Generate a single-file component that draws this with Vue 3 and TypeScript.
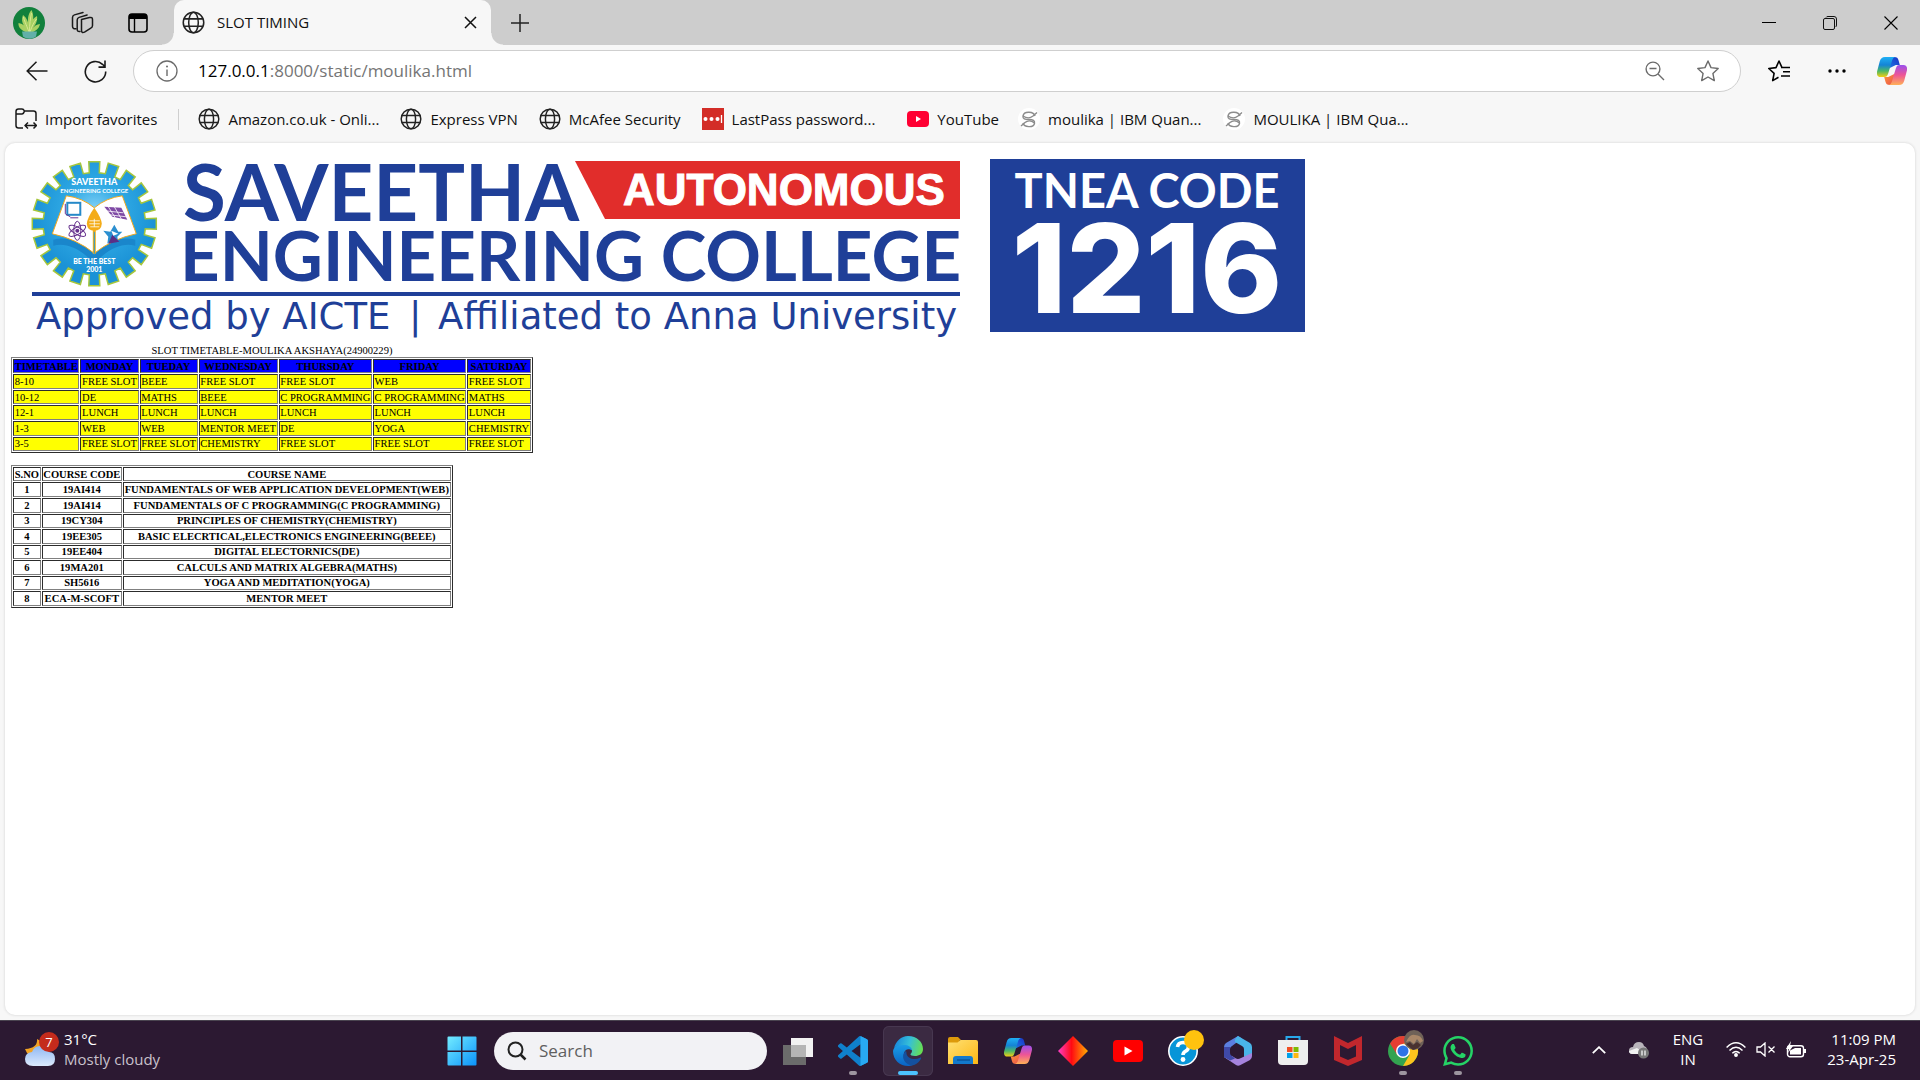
<script setup lang="ts">
interface Bookmark {
  label: string
  icon: 'globe' | 'lastpass' | 'youtube' | 'ibm'
}

const bookmarks: Bookmark[] = [
  { label: 'Amazon.co.uk - Onli...', icon: 'globe' },
  { label: 'Express VPN', icon: 'globe' },
  { label: 'McAfee Security', icon: 'globe' },
  { label: 'LastPass password...', icon: 'lastpass' },
  { label: 'YouTube', icon: 'youtube' },
  { label: 'moulika | IBM Quan...', icon: 'ibm' },
  { label: 'MOULIKA | IBM Qua...', icon: 'ibm' },
]

const days: string[] = ['TIMETABLE', 'MONDAY', 'TUEDAY', 'WEDNESDAY', 'THURSDAY', 'FRIDAY', 'SATURDAY']

const slots: string[][] = [
  ['8-10', 'FREE SLOT', 'BEEE', 'FREE SLOT', 'FREE SLOT', 'WEB', 'FREE SLOT'],
  ['10-12', 'DE', 'MATHS', 'BEEE', 'C PROGRAMMING', 'C PROGRAMMING', 'MATHS'],
  ['12-1', 'LUNCH', 'LUNCH', 'LUNCH', 'LUNCH', 'LUNCH', 'LUNCH'],
  ['1-3', 'WEB', 'WEB', 'MENTOR MEET', 'DE', 'YOGA', 'CHEMISTRY'],
  ['3-5', 'FREE SLOT', 'FREE SLOT', 'CHEMISTRY', 'FREE SLOT', 'FREE SLOT', 'FREE SLOT'],
]

const courses: string[][] = [
  ['1', '19AI414', 'FUNDAMENTALS OF WEB APPLICATION DEVELOPMENT(WEB)'],
  ['2', '19AI414', 'FUNDAMENTALS OF C PROGRAMMING(C PROGRAMMING)'],
  ['3', '19CY304', 'PRINCIPLES OF CHEMISTRY(CHEMISTRY)'],
  ['4', '19EE305', 'BASIC ELECRTICAL,ELECTRONICS ENGINEERING(BEEE)'],
  ['5', '19EE404', 'DIGITAL ELECTORNICS(DE)'],
  ['6', '19MA201', 'CALCULS AND MATRIX ALGEBRA(MATHS)'],
  ['7', 'SH5616', 'YOGA AND MEDITATION(YOGA)'],
  ['8', 'ECA-M-SCOFT', 'MENTOR MEET'],
]

// Outline of the cog wheel in the college emblem, centred on the origin.
function cogPoints(teeth: number, inner: number, outer: number, half: number): string {
  const points: string[] = []
  for (let i = 0; i < teeth; i++) {
    const a = (i * 2 * Math.PI) / teeth
    const corners = [[-half, inner], [-half - 0.5, outer], [half + 0.5, outer], [half, inner]]
    for (const [x, y] of corners) {
      const px = x * Math.cos(a) + y * Math.sin(a)
      const py = x * Math.sin(a) - y * Math.cos(a)
      points.push(`${px.toFixed(2)},${py.toFixed(2)}`)
    }
  }
  return points.join(' ')
}

const cog = cogPoints(20, 51, 62, 5)
</script>

<template>
  <div class="screen">
    <svg class="sprite" aria-hidden="true">
      <defs>
        <linearGradient id="cpLeft" x1="0" y1="0" x2="0" y2="1">
          <stop offset="0" stop-color="#1fb0f5" /><stop offset=".4" stop-color="#1484d6" />
          <stop offset=".7" stop-color="#4cb866" /><stop offset="1" stop-color="#f4cf12" />
        </linearGradient>
        <linearGradient id="cpTop" x1="0" y1="1" x2="1" y2="0">
          <stop offset="0" stop-color="#1d7fe8" /><stop offset="1" stop-color="#1a2fc4" />
        </linearGradient>
        <linearGradient id="cpRight" x1="0" y1="0" x2="0" y2="1">
          <stop offset="0" stop-color="#9a50ee" /><stop offset=".5" stop-color="#ee5596" />
          <stop offset="1" stop-color="#ffb056" />
        </linearGradient>
        <linearGradient id="cpBottom" x1="0" y1="0" x2="1" y2="1">
          <stop offset="0" stop-color="#ff9a3c" /><stop offset="1" stop-color="#e84a4a" />
        </linearGradient>
        <linearGradient id="edgeTop" x1="0" y1=".4" x2="1" y2=".6">
          <stop offset="0" stop-color="#1787dc" /><stop offset=".5" stop-color="#36bfd8" />
          <stop offset="1" stop-color="#68e04e" />
        </linearGradient>
        <linearGradient id="edgeBody" x1="0" y1="0" x2="0" y2="1">
          <stop offset="0" stop-color="#1ba0e8" /><stop offset="1" stop-color="#0a63c4" />
        </linearGradient>
        <linearGradient id="winTile" x1="0" y1="0" x2="1" y2="1">
          <stop offset="0" stop-color="#73ecff" /><stop offset="1" stop-color="#0b92fa" />
        </linearGradient>
        <linearGradient id="folder" x1="0" y1="0" x2="1" y2="1">
          <stop offset="0" stop-color="#ffe073" /><stop offset="1" stop-color="#fcb714" />
        </linearGradient>
        <linearGradient id="diamond">
          <stop offset="0" stop-color="#ff3fc8" /><stop offset=".45" stop-color="#ff0a12" />
          <stop offset="1" stop-color="#ffae00" />
        </linearGradient>
        <linearGradient id="cloud" x1="0" y1="0" x2="0" y2="1">
          <stop offset="0" stop-color="#8fb8f2" /><stop offset="1" stop-color="#dce9fc" />
        </linearGradient>
      </defs>
      <symbol id="globe" viewBox="0 0 24 24">
        <g fill="none" stroke="#222" stroke-width="1.6">
          <circle cx="12" cy="12" r="10.7" /><ellipse cx="12" cy="12" rx="5" ry="10.7" />
          <path d="M2 8.2h20M2 15.8h20" />
        </g>
      </symbol>
      <symbol id="copilot" viewBox="0 0 30 28">
        <path d="M13 0h4c3 0 4 1 4.600 3.500l1.200 4.500h-4l-8 4z" fill="url(#cpTop)" />
        <path d="M17 28h-4c-3 0-4-1-4.600-3.500l-1.200-4.500h4l8-4z" fill="url(#cpBottom)" />
        <path d="M8 0h11c-2.500 0-3.500 2-4.200 4.500l-3.600 12c-.8 2.500-1.700 3.500-3.700 3.500h-4c-3 0-4.200-2.500-3.300-6l2.500-9.500c.9-3 2.300-4.500 5.300-4.500z" fill="url(#cpLeft)" />
        <path d="M22 28h-11c2.500 0 3.500-2 4.200-4.500l3.600-12c.8-2.500 1.700-3.500 3.700-3.500h4c3 0 4.200 2.500 3.300 6l-2.500 9.500c-.9 3-2.300 4.500-5.300 4.500z" fill="url(#cpRight)" />
      </symbol>
    </svg>

    <header class="browser">
      <div class="tab-strip">
        <button class="plain avatar" aria-label="Profile">
          <svg width="32" height="32" viewBox="0 0 32 32">
            <circle cx="16" cy="16" r="16" fill="#11803c" />
            <path d="M16 26C8 24 5 20 5.500 16c5 1 8 4 10 8C9 18 8 13 10 8c4 3 6 8 6 14C14 12 15 7 18.500 3c3 6 2 12-1.500 19 0-6 3-11 7-13 1 5-2 10-6 14 3-4 6-6 9-6-1 5-5 8-11 9z" fill="#a8d062" />
            <path d="M16 25C13 17 11 13 10.500 10M16.500 25c0-8 1-14 2-19M17 25c2-6 4-10 6.500-13" fill="none" stroke="#d8ea92" stroke-width="1" />
            <path d="M9 24.500h15l-1 5c-4 3-9 3-13 0z" fill="#62b0a8" />
          </svg>
        </button>
        <button class="plain workspaces" aria-label="Workspaces">
          <svg width="23" height="23" viewBox="0 0 23 23" fill="none" stroke="#1a1a1a" stroke-width="1.500" stroke-linejoin="round" stroke-linecap="round">
            <path d="M10.500 8.500 18.500 6.500q3-.6 3 2v6q0 1.800-1.700 2.600l-6.300 4q-3 1.400-3-1.800z" />
            <path d="M9 20.500q-2.800.4-2.800-2V9q0-2 1.900-2.600l8-2.400" />
            <path d="M5 17.800q-3.500.2-3.500-2.500V6.500q0-2 1.900-2.600L12 1.500" />
          </svg>
        </button>
        <button class="plain" aria-label="Tab actions menu">
          <svg width="20" height="20" viewBox="0 0 20 20">
            <rect x="1" y="1" width="18" height="18" rx="3" fill="none" stroke="#000" stroke-width="1.600" />
            <path d="M1 6V4q0-3 3-3h12q3 0 3 3v2z" fill="#000" /><path d="M6.500 6v13" stroke="#000" stroke-width="1.400" />
          </svg>
        </button>
        <div class="tab">
          <svg width="23" height="23"><use href="#globe" /></svg>
          <span class="tab-title">SLOT TIMING</span>
          <button class="plain" aria-label="Close tab">
            <svg width="13" height="13" viewBox="0 0 13 13"><path d="M1 1l11 11M12 1 1 12" stroke="#111" stroke-width="1.500" /></svg>
          </button>
        </div>
        <button class="plain new-tab" aria-label="New tab">
          <svg width="18" height="18" viewBox="0 0 18 18"><path d="M9 0v18M0 9h18" stroke="#222" stroke-width="1.500" /></svg>
        </button>
        <div class="window-buttons">
          <button class="plain" aria-label="Minimise">
            <svg width="14" height="14" viewBox="0 0 14 14"><path d="M0 6.500h14" stroke="#000" /></svg>
          </button>
          <button class="plain" aria-label="Restore">
            <svg width="14" height="14" viewBox="0 0 14 14" fill="none" stroke="#111"><rect x=".5" y="2.500" width="11" height="11" rx="1.500" /><path d="M3 1.500q.5-1 2-1h6q2.500 0 2.500 2.500v6q0 1.500-1 2" /></svg>
          </button>
          <button class="plain" aria-label="Close">
            <svg width="14" height="14" viewBox="0 0 14 14"><path d="M.5.5l13 13M13.500.5l-13 13" stroke="#000" stroke-width="1.100" /></svg>
          </button>
        </div>
      </div>

      <div class="toolbar">
        <button class="plain tool" aria-label="Back">
          <svg width="22" height="20" viewBox="0 0 22 20" fill="none" stroke="#1a1a1a" stroke-width="1.500"><path d="M21.500 10H1M10.500.8 1.200 10l9.300 9.200" /></svg>
        </button>
        <button class="plain tool" aria-label="Refresh">
          <svg width="23" height="23" viewBox="0 0 23 23" fill="none" stroke="#1a1a1a" stroke-width="1.600"><path d="M21.700 11.500A10.200 10.200 0 1 1 18.500 4.300L21 6.800M21 .5v6.600h-6.500" /></svg>
        </button>
        <div class="address">
          <svg width="22" height="22" viewBox="0 0 22 22"><circle cx="11" cy="11" r="10" fill="none" stroke="#6b6b6b" stroke-width="1.300" /><path d="M11 9.500v6.500" stroke="#6b6b6b" stroke-width="1.400" /><circle cx="11" cy="6.500" r="1" fill="#6b6b6b" /></svg>
          <label class="host" for="url">127.0.0.1</label>
          <input id="url" class="path" type="text" value=":8000/static/moulika.html" />
          <button class="plain" aria-label="Zoom out">
            <svg width="20" height="20" viewBox="0 0 20 20" fill="none" stroke="#6b6b6b" stroke-width="1.400"><circle cx="8" cy="8" r="6.900" /><path d="M4.500 7.500h7M13 13l6 6" /></svg>
          </button>
          <button class="plain star" aria-label="Add to favorites">
            <svg width="22" height="22" viewBox="0 0 22 22" fill="none" stroke="#6b6b6b" stroke-width="1.400" stroke-linejoin="round"><path d="m11 1 3 6.600 7.200.9-5.300 4.900 1.400 7.200L11 17l-6.300 3.600 1.400-7.200L.8 8.500 8 7.600z" /></svg>
          </button>
        </div>
        <button class="plain tool" aria-label="Favorites">
          <svg width="22" height="22" viewBox="0 0 22 22" fill="none" stroke="#000" stroke-width="1.600" stroke-linejoin="round"><path d="M10.500 17.200 4.700 20.600l1.400-7.200L.8 8.500 8 7.600 11 1l3 6.600M13 7.500h9M15 11.700h7M13 16h9" /></svg>
        </button>
        <button class="plain tool" aria-label="Settings and more">
          <svg width="18" height="4" viewBox="0 0 18 4"><circle cx="2" cy="2" r="1.700" /><circle cx="9" cy="2" r="1.700" /><circle cx="16" cy="2" r="1.700" /></svg>
        </button>
        <button class="plain tool copilot" aria-label="Copilot"><svg width="30" height="28"><use href="#copilot" /></svg></button>
      </div>

      <nav class="bookmarks">
        <button class="plain bookmark">
          <svg width="22" height="22" viewBox="0 0 22 22" fill="none" stroke="#1a1a1a" stroke-width="1.500" stroke-linejoin="round"><path d="M8 20H3.500q-2.500 0-2.500-2.500V3.500Q1 1 3.500 1H7q1.500 0 2.500 2h9Q21 3 21 5.500V13M1 6h6q1.500 0 2.500-3" /><path d="M10.500 17.500h10.500M13 14.500l-3 3 3 3M18.500 14.500l3 3-3 3" /></svg>
          Import favorites
        </button>
        <span class="divider"></span>
        <a v-for="mark in bookmarks" :key="mark.label" href="#" class="bookmark" :class="mark.icon">
          <svg v-if="mark.icon === 'globe'" width="22" height="22"><use href="#globe" /></svg>
          <svg v-else-if="mark.icon === 'lastpass'" width="22" height="22" viewBox="0 0 22 22"><path d="M0 0h22v22H0z" fill="#d32d27" /><circle cx="3.500" cy="11" r="2" fill="#fff" /><circle cx="9.500" cy="11" r="2" fill="#fff" /><circle cx="15.500" cy="11" r="2" fill="#fff" /><path d="M19.500 7v8" stroke="#fff" stroke-width="1.300" /></svg>
          <svg v-else-if="mark.icon === 'youtube'" width="22" height="22" viewBox="0 0 22 22"><rect y="3" width="22" height="16" rx="4" fill="#ff0033" /><path d="M9 8v6l5-3z" fill="#fff" /></svg>
          <svg v-else width="22" height="22" viewBox="0 0 22 22"><circle cx="11" cy="11" r="11" fill="#fff" /><g fill="none" stroke="#8c8c8c" stroke-width="1.400"><path d="M17 8C16 3.500 6 2.500 5 8c-.5 3 2 3.500 6 3.500s6 1 5.500 4C15.500 20 6 19.500 5 15" /><path d="M19 4.500 15 8c-3 2.500-7 2-10 0M3 18l4-3.500c3-2.500 7-1.500 9.500.5" /></g></svg>
          {{ mark.label }}
        </a>
      </nav>
    </header>

    <main class="viewport">
      <div class="page">
        <svg class="banner" width="1300" height="196" viewBox="11 149 1300 196" role="img" aria-label="Saveetha Engineering College">
          <defs>
            <radialGradient id="cogFill" cx=".5" cy=".4" r=".5">
              <stop offset="0" stop-color="#8ad4f7" /><stop offset=".45" stop-color="#2fa9e4" /><stop offset="1" stop-color="#1b92d6" />
            </radialGradient>
          </defs>
          <g transform="translate(94.300 223.800)">
            <polygon :points="cog" fill="url(#cogFill)" stroke="#a6c63c" stroke-width="1.500" />
            <path d="M-41 16C-28 12-12 18 0 31 12 18 28 12 41 16V22C28 18 12 26 0 40-12 26-28 18-41 22z" fill="#1a86cb" />
            <path d="M-28-28Q-12-26 0-16 12-26 28-28L42 10Q18 15 0 29.500-18 15-42 10z" fill="#fff" stroke="#f2a81d" stroke-width="1" />
            <path d="M0 5v25" stroke="#f5ad17" stroke-width="3" /><path d="M0 8v22" stroke="#2199da" stroke-width="1" />
            <path d="M0-16Q7-6 7.500 0 7 7 0 7-7 7-7.500 0-7-6 0-16z" fill="#f4ac18" />
            <path d="M-5-3H5.500M-5 0H5.500M-4 3H5M0-5v8" stroke="#fff" stroke-width=".8" />
            <rect x="-27" y="-21" width="13" height="12" fill="none" stroke="#2589c8" stroke-width="2" />
            <path d="M-29-20v10l5 3M-24-6h8" stroke="#6a3390" stroke-width="1" fill="none" />
            <g fill="none" stroke="#65308c" stroke-width="1">
              <ellipse cx="-17" cy="7" rx="3.500" ry="9.500" />
              <ellipse cx="-17" cy="7" rx="3.500" ry="9.500" transform="rotate(60 -17 7)" />
              <ellipse cx="-17" cy="7" rx="3.500" ry="9.500" transform="rotate(120 -17 7)" />
            </g>
            <circle cx="-17" cy="7" r="2" fill="#65308c" />
            <path d="M10-17 27-16 33-4 18-7z" fill="#7f4aa5" /><path d="M14-17l7 11M20-17l7 12M11-13l18 2M15-9l17 2" stroke="#fff" stroke-width=".8" />
            <path d="M20 1l4 7h4l-5 5 1 6-5-3-6 4 1-7-5-6 7 1z" fill="#2b8fd0" /><path d="M14 20l4-9 7 7z" fill="#5b2f86" /><path d="M17 7l7 3-5 2z" fill="#fff" />
            <g class="emblem-text" text-anchor="middle" fill="#fff">
              <text class="emblem-name" y="-39">SAVEETHA</text>
              <text class="emblem-sub" y="-31">ENGINEERING COLLEGE</text>
              <text class="emblem-motto" y="40">BE THE BEST</text>
              <text class="emblem-motto" y="48">2001</text>
            </g>
          </g>
          <g class="college" fill="#1f3f98">
            <text class="saveetha" x="183" y="221">SAVEETHA</text>
            <text class="engineering" x="180" y="281">ENGINEERING COLLEGE</text>
            <path d="M32 292h928v4H32z" />
            <g class="tagline">
              <text x="36" y="329">Approved by AICTE</text>
              <text x="409" y="329">|</text>
              <text x="438" y="329">Affiliated to Anna University</text>
            </g>
          </g>
          <path d="M575 161h385v58H605z" fill="#e12d2b" />
          <text class="autonomous" x="623" y="205">AUTONOMOUS</text>
          <path d="M990 159h315v173H990z" fill="#1f3f98" />
          <text class="tnea" x="1147" y="208" text-anchor="middle">TNEA CODE</text>
          <text class="code" x="1147" y="313" text-anchor="middle">1216</text>
        </svg>

        <div class="tables">
          <table>
            <caption>SLOT TIMETABLE-MOULIKA AKSHAYA(24900229)</caption>
            <thead>
              <tr class="days"><th v-for="day in days" :key="day" scope="col">{{ day }}</th></tr>
            </thead>
            <tbody>
              <tr v-for="row in slots" :key="row[0]" class="slots">
                <td v-for="(cell, i) in row" :key="i">{{ cell }}</td>
              </tr>
            </tbody>
          </table>
          <br />
          <table>
            <thead>
              <tr><th scope="col">S.NO</th><th scope="col">COURSE CODE</th><th scope="col">COURSE NAME</th></tr>
            </thead>
            <tbody>
              <tr v-for="row in courses" :key="row[0]">
                <th v-for="(cell, i) in row" :key="i">{{ cell }}</th>
              </tr>
            </tbody>
          </table>
        </div>
      </div>
    </main>

    <footer class="taskbar">
      <button class="plain weather">
        <svg width="36" height="38" viewBox="0 0 36 38">
          <path d="M12 8q1 9-12 10 3 8 10 8 9-1 8-10-1-6-6-8z" fill="#f2a324" />
          <path d="M8 35q-8 0-8-7 0-6 7-7 2-6 8-6 7 0 9 6 6 0 6 7t-7 7z" fill="url(#cloud)" />
          <circle cx="24" cy="11" r="10" fill="#c42b1c" /><text class="badge" x="24" y="16" text-anchor="middle">7</text>
        </svg>
        <span class="lines"><span class="temp">31°C</span><span class="sky">Mostly cloudy</span></span>
      </button>

      <div class="apps">
        <button class="plain app" aria-label="Start">
          <svg width="30" height="30" viewBox="0 0 30 30" fill="url(#winTile)"><path d="M1.500.500H14v14H.500V1.500q0-1 1-1zM15.500.500h13q1 0 1 1v13h-14zM.500 16H14v13.500H1.500q-1 0-1-1zM15.500 16h14v12.500q0 1-1 1h-13z" /></svg>
        </button>
        <div class="search">
          <svg width="20" height="20" viewBox="0 0 20 20" fill="none" stroke="#222" stroke-width="2"><circle cx="8.500" cy="8.500" r="7" /><path d="m13.500 13.500 5 5" stroke-width="2.500" /></svg>
          <input type="search" placeholder="Search" aria-label="Search" />
        </div>
        <button class="plain app" aria-label="Task view">
          <svg width="30" height="28" viewBox="0 0 30 28"><path d="M8 1h22v19H8z" fill="#f2f2f2" /><path d="M0 8h23v20H0z" fill="#6b6b6b" /><path d="M8 8h15v12H8z" fill="#b5b5b5" /></svg>
        </button>
        <button class="plain app" aria-label="Visual Studio Code">
          <svg width="30" height="30" viewBox="0 0 24 24"><path fill="#0f80cc" d="M23.150 2.587L18.210.210a1.494 1.494 0 0 0-1.705.290l-9.460 8.630-4.120-3.128a.999.999 0 0 0-1.276.057L.327 7.261A1 1 0 0 0 .326 8.740L3.899 12 .326 15.260a1 1 0 0 0 .001 1.479L1.650 17.940a.999.999 0 0 0 1.276.057l4.120-3.128 9.460 8.630a1.492 1.492 0 0 0 1.704.290l4.942-2.377A1.500 1.500 0 0 0 24 20.060V3.939a1.500 1.500 0 0 0-.850-1.352zm-5.146 14.861L10.826 12l7.178-5.448v10.896z" /><path d="M18 0l5.200 2.600q.8.400.8 1.300v16.200q0 .9-.8 1.300L18 24z" fill="#28a9f2" /></svg>
          <span class="running"></span>
        </button>
        <button class="plain app active" aria-label="Microsoft Edge">
          <svg width="30" height="30" viewBox="0 0 30 30">
            <path d="M0 15C1 10 6 8 11 8c5 0 9 3 9 7-4-3-8-2-9 2-1 5 3 11 9 12-2 .8-3.500 1-5 1C7 30 0 24 0 15z" fill="url(#edgeBody)" />
            <path d="M1 12C3 5 8 0 15 0c9 0 15 6 15 13 0 5-4 7-8 7-3 0-5-1-4.500-2 1-1 1.500-2 1.500-3.500 0-3.500-4-5.500-8-5.500-4.500 0-8 1-10 3z" fill="url(#edgeTop)" />
            <path d="M13 15c-6 4-2 14 6.500 14.300C24 28.500 27 25 28 22.500c.4-.9-.3-1.100-1-.7-6 3-13 .2-13.500-4.300-.1-1 0-2-.5-2.500z" fill="#14519f" />
          </svg>
          <span class="running"></span>
        </button>
        <button class="plain app" aria-label="File Explorer">
          <svg width="30" height="27" viewBox="0 0 30 27"><path d="M0 2q0-2 2-2h8l3 3h-1l-2 4H0z" fill="#dd9a0b" /><path d="M0 5.500h9.500L12.500 3H28q2 0 2 2v22H0z" fill="url(#folder)" /><path d="M5 27v-5q0-3 3-3h14q3 0 3 3v5z" fill="#1379cc" /><path d="M9 23h13" stroke="#0a4f94" stroke-width="1.300" /></svg>
        </button>
        <button class="plain app" aria-label="Copilot"><svg width="28" height="26"><use href="#copilot" /></svg></button>
        <button class="plain app" aria-label="Gem"><svg width="30" height="30" viewBox="0 0 30 30"><path d="m15 0 15 15-15 15L0 15z" fill="url(#diamond)" /></svg></button>
        <button class="plain app" aria-label="YouTube"><svg width="30" height="22" viewBox="0 0 30 22"><rect width="30" height="22" rx="4" fill="#f00" /><path d="M11.500 6.500v9l8-4.500z" fill="#fff" /></svg></button>
        <button class="plain app" aria-label="Help">
          <svg class="spill" width="30" height="30" viewBox="0 0 30 30"><circle cx="15" cy="15" r="14.200" fill="#0795d8" stroke="#fff" stroke-width="1.600" /><path d="M9.500 11q.5-4.500 5.500-4.500t5.500 4.200q0 2.800-3 4.600-2.500 1.500-2.500 3.700" fill="none" stroke="#fff" stroke-width="3.600" /><circle cx="15" cy="23.500" r="2.400" fill="#fff" /><circle cx="26" cy="4" r="10" fill="#ffc20e" /></svg>
        </button>
        <button class="plain app" aria-label="Microsoft 365">
          <svg width="28" height="30" viewBox="0 0 28 30"><path d="M14 0 2 7Q0 8.500 0 11v10l6 3.500V13q0-2 2-3l10-7.500z" fill="#5b7fe0" /><path d="M14 0l12 7q2 1.500 2 4v9l-8 1v-8q0-2-2-3l-7-4q-1-3 3-6z" fill="#49b4e8" /><path d="M0 21 12 29q2 1.300 4 .3L26 24q2-1.500 2-4v-3l-11 5q-3 1.600-5 .5L8 20l-4 2z" fill="#a583dd" /><path d="M0 11v10l6 3.500 5-2L8 20q-2-1-2-3v-6z" fill="#3f49a8" /></svg>
        </button>
        <button class="plain app" aria-label="Microsoft Store">
          <svg width="30" height="29" viewBox="0 0 30 29"><path d="M8.500 6V1h13v5" fill="none" stroke="#28a8ea" stroke-width="2" /><path d="M0 4h30v21q0 4-4 4H4q-4 0-4-4z" fill="#eee" /><path d="M9 11h5.500v5H9z" fill="#f04e23" /><path d="M15.500 11h5v5h-5z" fill="#7fba00" /><path d="M9 17h5.500v5H9z" fill="#00a1ea" /><path d="M15.500 17h5v5h-5z" fill="#fdb813" /></svg>
        </button>
        <button class="plain app" aria-label="McAfee"><svg width="28" height="30" viewBox="0 0 28 30"><path d="m0 0 14 7L28 0v24l-14 6-14-6z" fill="#c1272d" /><path d="m6 9 8 4 8-4v11.500l-8 3.500-8-3.500z" fill="#2c1932" /></svg></button>
        <button class="plain app" aria-label="Google Chrome">
          <svg class="spill" width="30" height="30" viewBox="0 0 30 30"><circle cx="15" cy="15" r="15" fill="#33a350" /><path d="M2 7.500A15 15 0 0 1 28 7.500L15 8.500 9 18.500z" fill="#e53e32" /><path d="M28 7.500A15 15 0 0 1 15 30l6.500-11L15 7.500z" fill="#fcc31d" /><circle cx="15" cy="15" r="7" fill="#fff" /><circle cx="15" cy="15" r="5.500" fill="#2d73e8" /><circle cx="26" cy="4" r="10" fill="#6f6258" /><path d="M18 6q4-9 9-7 6 0 8 6l-3 2-3-4-3 5-4-3z" fill="#a98768" /><path d="M18 8l4-2 3 3 4-3 4 3-3 3-5 2z" fill="#4a3230" /></svg>
          <span class="running"></span>
        </button>
        <button class="plain app" aria-label="WhatsApp">
          <svg width="30" height="30" viewBox="0 0 24 24"><path fill="#25d366" d="M17.472 14.382c-.297-.149-1.758-.867-2.030-.967-.273-.099-.471-.148-.670.150-.197.297-.767.966-.940 1.164-.173.199-.347.223-.644.075-.297-.150-1.255-.463-2.390-1.475-.883-.788-1.480-1.761-1.653-2.059-.173-.297-.018-.458.130-.606.134-.133.298-.347.446-.520.149-.174.198-.298.298-.497.099-.198.050-.371-.025-.520-.075-.149-.669-1.612-.916-2.207-.242-.579-.487-.500-.669-.510-.173-.008-.371-.010-.570-.010-.198 0-.520.074-.792.372-.272.297-1.040 1.016-1.040 2.479 0 1.462 1.065 2.875 1.213 3.074.149.198 2.096 3.200 5.077 4.487.709.306 1.262.489 1.694.625.712.227 1.360.195 1.871.118.571-.085 1.758-.719 2.006-1.413.248-.694.248-1.289.173-1.413-.074-.124-.272-.198-.570-.347m-5.421 7.403h-.004a9.870 9.870 0 01-5.031-1.378l-.361-.214-3.741.982.998-3.648-.235-.374a9.860 9.860 0 01-1.510-5.260c.001-5.450 4.436-9.884 9.888-9.884 2.640 0 5.122 1.030 6.988 2.898a9.825 9.825 0 012.893 6.994c-.003 5.450-4.437 9.884-9.885 9.884m8.413-18.297A11.815 11.815 0 0012.050 0C5.495 0 .160 5.335.157 11.892c0 2.096.547 4.142 1.588 5.945L.057 24l6.305-1.654a11.882 11.882 0 005.683 1.448h.005c6.554 0 11.890-5.335 11.893-11.893a11.821 11.821 0 00-3.480-8.413Z" /></svg>
          <span class="running"></span>
        </button>
      </div>

      <div class="tray">
        <button class="plain" aria-label="Show hidden icons"><svg width="14" height="8" viewBox="0 0 14 8" fill="none" stroke="#fff" stroke-width="1.800"><path d="m.8 7.200 6.200-6 6.200 6" /></svg></button>
        <button class="plain cloud-sync" aria-label="OneDrive"><svg width="20" height="18" viewBox="0 0 20 18"><path d="M4 13q-4 0-4-3.500T4 6q1-5 6-5 4 0 5 4 3 1 3 4t-3 4z" fill="#b9b4bb" /><path d="M3 13q-3-.5-3-3l8-3 8 6z" fill="#f1f1f1" /><circle cx="14.500" cy="12" r="5.500" fill="#777" /><path d="M13 9.500v5M16 9.500v5" stroke="#fff" stroke-width="1.200" /></svg></button>
        <button class="plain lines language"><span>ENG</span><span>IN</span></button>
        <button class="plain status" aria-label="Network, sound and battery">
          <svg width="20" height="15" viewBox="0 0 20 15" fill="none" stroke="#fff" stroke-width="1.500"><path d="M.6 5.500q9.400-9.400 18.800 0M3.500 8.500q6.500-6.400 13 0M6.300 11.300q3.700-3.600 7.400 0" /><circle cx="10" cy="13" r="1.200" fill="#fff" /></svg>
          <svg width="20" height="15" viewBox="0 0 20 15" fill="none" stroke="#fff" stroke-width="1.300"><path d="M1 5v5h3.500L9 14V1L4.500 5zM12.500 4.500l6 6M18.500 4.500l-6 6" /></svg>
          <svg width="20" height="18" viewBox="0 0 20 18"><rect x="1.500" y="4.700" width="16" height="11" rx="2.500" fill="none" stroke="#fff" stroke-width="1.400" /><path d="M4 9.500 9 7h6v6.500H4zM18 8h2v4h-2z" fill="#fff" /><path d="M5 0 0 8h3L2 12l5-7H4z" fill="#fff" /></svg>
        </button>
        <button class="plain lines clock"><span>11:09 PM</span><span>23-Apr-25</span></button>
      </div>
    </footer>
  </div>
</template>

<style>
body {
  margin: 0;
}
</style>

<style scoped>
.screen {
  display: flex;
  flex-direction: column;
  min-height: 100vh;
  background: #f7f7f7;
  font-family: "Open Sans", "Noto Sans", sans-serif;
  font-size: 15px;
  color: #111;
}
.sprite {
  position: absolute;
  width: 0;
  height: 0;
}
svg {
  display: block;
  flex: none;
}
.plain {
  display: flex;
  align-items: center;
  justify-content: center;
  padding: 0;
  border: 0;
  background: none;
  font: inherit;
  color: inherit;
}
.tab-strip {
  display: flex;
  align-items: center;
  height: 45px;
  padding-left: 13px;
  background: #cdcdcd;
}
.avatar {
  margin-top: 1px;
}
.workspaces {
  margin: 0 34px 0 26px;
}
.tab {
  position: relative;
  display: flex;
  align-items: center;
  box-sizing: border-box;
  width: 317px;
  height: 45px;
  margin-left: 26px;
  padding: 0 14px 0 8px;
  border-radius: 10px 10px 0 0;
  background: #f7f7f7;
}
.tab::before,
.tab::after {
  content: "";
  position: absolute;
  bottom: 0;
  width: 12px;
  height: 12px;
}
.tab::before {
  right: 100%;
  background: radial-gradient(circle at 0 0, transparent 11px, #f7f7f7 12px);
}
.tab::after {
  left: 100%;
  background: radial-gradient(circle at 100% 0, transparent 11px, #f7f7f7 12px);
}
.tab-title {
  flex: 1;
  margin-left: 12px;
}
.tab-title,
.host,
.lines {
  padding-bottom: 2px;
}
.new-tab {
  margin-left: 20px;
}
.window-buttons {
  display: flex;
  gap: 47px;
  margin-left: auto;
  padding-right: 22px;
}
.toolbar {
  display: flex;
  align-items: center;
  padding: 5px 8px 5px 17px;
}
.tool {
  width: 40px;
  height: 40px;
}
.tool + .tool {
  margin-left: 18px;
}
.address {
  display: flex;
  flex: 1;
  align-items: center;
  box-sizing: border-box;
  height: 42px;
  margin: 0 18px;
  padding: 0 21px 0 22px;
  border: 1px solid #cfcfcf;
  border-radius: 21px;
  background: #fff;
  font-size: 17px;
}
.host {
  margin-left: 20px;
  color: #000;
}
.path {
  flex: 1;
  min-width: 0;
  padding: 0 0 2px;
  border: 0;
  outline: 0;
  background: none;
  font: inherit;
  color: #757575;
}
.star {
  margin-left: 32px;
}
.tool.copilot {
  margin-left: 15px;
}
.bookmarks {
  display: flex;
  align-items: center;
  box-sizing: border-box;
  height: 46px;
  padding: 0 0 2px 15px;
}
.bookmark {
  display: flex;
  align-items: center;
  gap: 8px;
  margin-right: 21px;
  color: #111;
  text-decoration: none;
  white-space: nowrap;
}
.lastpass {
  margin-right: 32px;
}
.youtube {
  margin-right: 19px;
}
.ibm {
  margin-right: 22px;
}
.divider {
  width: 1px;
  height: 21px;
  margin-right: 19px;
  background: #cfcfcf;
}
.viewport {
  display: flex;
  flex: 1;
  flex-direction: column;
  padding: 0 5px 5px;
}
.page {
  flex: 1;
  padding: 6px;
  border-radius: 10px;
  background: #fff;
  box-shadow: 0 0 3px #cfcfcf;
}
.banner {
  overflow: visible;
}
.emblem-text,
.college,
.tnea {
  font-family: Lato, sans-serif;
  font-weight: 700;
}
.emblem-name {
  font-size: 9px;
  font-weight: 900;
}
.emblem-sub {
  font-size: 6px;
}
.emblem-motto {
  font-size: 7px;
  font-weight: 900;
}
.saveetha {
  font-size: 78px;
}
.engineering {
  font-size: 69px;
}
.tagline {
  font-family: "DejaVu Sans", sans-serif;
  font-size: 37px;
  font-weight: 400;
}
.autonomous {
  fill: #fff;
  stroke: #fff;
  stroke-width: 1px;
  font: 700 44px "Liberation Sans", sans-serif;
}
.tnea {
  fill: #fff;
  font-size: 47px;
}
.code {
  fill: #fff;
  font: 800 124px Inter, sans-serif;
}
/* The web page is viewed zoomed out. */
.tables {
  zoom: 0.66;
  font: 16px/18px "Liberation Serif", serif;
  color: #000;
}
table {
  border: 1px outset gray;
  border-spacing: 2px;
}
th,
td {
  padding: 1px;
  border: 1px inset gray;
  line-height: 17px;
  white-space: nowrap;
}
.days th {
  background: #00f;
}
.slots td {
  background: #ff0;
}
.taskbar {
  display: grid;
  grid-template-columns: 1fr auto 1fr;
  align-items: center;
  box-sizing: border-box;
  height: 60px;
  border-top: 1px solid #4a4450;
  background: #2c1932;
  color: #fff;
}
.weather {
  justify-self: start;
  gap: 3px;
  margin-left: 25px;
}
.lines {
  display: flex;
  flex-direction: column;
  line-height: 20px;
}
.weather,
.tray {
  margin-bottom: 2px;
}
.weather .lines {
  align-items: flex-start;
}
.sky {
  color: #c9c1cc;
}
.badge {
  fill: #fff;
  font-size: 13px;
}
.apps {
  display: flex;
  align-items: center;
  gap: 5px;
}
.app {
  position: relative;
  width: 50px;
  height: 50px;
  border-radius: 6px;
}
.spill {
  overflow: visible;
}
.app.active {
  background: #3b2a42;
  box-shadow: inset 0 0 0 1px #473750;
}
.running {
  position: absolute;
  bottom: 1px;
  left: 21px;
  width: 8px;
  height: 4px;
  border-radius: 2px;
  background: #9d959f;
}
.active .running {
  left: 15px;
  width: 20px;
  background: #4cc2ff;
}
.search {
  display: flex;
  align-items: center;
  box-sizing: border-box;
  width: 273px;
  height: 38px;
  margin: 0 1px 0 2px;
  padding: 0 13px;
  gap: 12px;
  border-radius: 19px;
  background: #f2f2f5;
}
.search input {
  flex: 1;
  min-width: 0;
  padding: 0;
  border: 0;
  outline: 0;
  background: none;
  font: 17px "Open Sans", sans-serif;
}
.search input::placeholder {
  color: #5f5f5f;
}
.tray {
  display: flex;
  align-items: center;
  justify-content: flex-end;
  padding-right: 24px;
}
.cloud-sync {
  margin: 0 24px 0 23px;
}
.language {
  align-items: center;
}
.status {
  gap: 10px;
  margin: 0 21px 0 23px;
}
.clock {
  align-items: flex-end;
}
</style>
